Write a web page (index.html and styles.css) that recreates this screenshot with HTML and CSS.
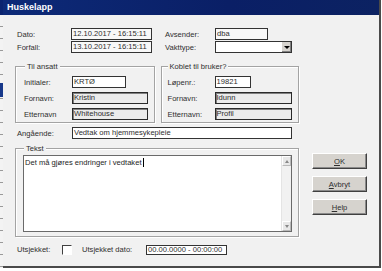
FILE: index.html
```html
<!DOCTYPE html>
<html lang="no">
  <head>
    <meta charset="UTF-8" />
    <title>Huskelapp</title>
    <link rel="stylesheet" href="styles.css">
  </head>
  <body>
    <div class="desk">
      <div class="edge"><span class="edge-mark"></span></div>

      <div class="dialog">
        <div class="titlebar">Huskelapp</div>

        <div class="body">
          <div class="main">
            <div class="head">
              <span>Dato:</span>
              <span class="field">12.10.2017 - 16:15:11</span>
              <span></span>
              <span>Avsender:</span>
              <span class="field sender">dba</span>

              <span>Forfall:</span>
              <span class="field">13.10.2017 - 16:15:11</span>
              <span></span>
              <span>Vakttype:</span>
              <span class="select">
                <span class="select-btn"><span class="tri-down"></span></span>
              </span>
            </div>

            <div class="groups">
              <div class="group g-ansatt">
                <span class="legend">Til ansatt</span>
                <div class="row">
                  <span class="lbl">Initialer:</span>
                  <span class="field white w-init">KRTØ</span>
                </div>
                <div class="row">
                  <span class="lbl">Fornavn:</span>
                  <span class="field ro w-name">Kristin</span>
                </div>
                <div class="row">
                  <span class="lbl">Etternavn</span>
                  <span class="field ro w-name">Whitehouse</span>
                </div>
              </div>

              <div class="group g-bruker">
                <span class="legend">Koblet til bruker?</span>
                <div class="row">
                  <span class="lbl">Løpenr.:</span>
                  <span class="field white w-nr">19821</span>
                </div>
                <div class="row">
                  <span class="lbl">Fornavn:</span>
                  <span class="field ro w-name2">Idunn</span>
                </div>
                <div class="row">
                  <span class="lbl">Etternavn:</span>
                  <span class="field ro w-name2">Profil</span>
                </div>
              </div>
            </div>

            <div class="subject">
              <span class="subject-lbl">Angående:</span>
              <span class="field white subject-field">Vedtak om hjemmesykepleie</span>
            </div>

            <div class="group g-tekst">
              <span class="legend">Tekst</span>
              <div class="memo">
                <div class="memo-text">Det må gjøres endringer i vedtaket<span class="caret"></span></div>
                <div class="scroll">
                  <span class="arrow"><span class="tri-up"></span></span>
                  <span class="arrow"><span class="tri-down small"></span></span>
                </div>
              </div>
            </div>

            <div class="checkout">
              <span class="co-lbl">Utsjekket:</span>
              <span class="checkbox"></span>
              <span class="co-date-lbl">Utsjekket dato:</span>
              <span class="field white co-date">00.00.0000 - 00:00:00</span>
            </div>
          </div>

          <div class="buttons">
            <button type="button" class="btn"><u>O</u>K</button>
            <button type="button" class="btn"><u>A</u>vbryt</button>
            <button type="button" class="btn"><u>H</u>elp</button>
          </div>
        </div>
      </div>
    </div>
  </body>
</html>
```

FILE: styles.css
```css
* {
  box-sizing: border-box;
}

body {
  margin: 0;
  background: #fff;
  font-family: "Liberation Sans", Arial, sans-serif;
  font-size: 7.6px;
  color: #2e2e2e;
}

.desk {
  display: flex;
  width: 382px;
  height: 271px;
  background: #fff;
}

.edge {
  width: 3px;
  height: 268px;
  display: flex;
  flex-direction: column;
  background:
    repeating-linear-gradient(#f3f3f3 0 11px, #9a9a9a 11px 12px),
    #f3f3f3;
  border-top: 15px solid #0b2470;
}

.edge-mark {
  margin-top: 68px;
  height: 14px;
  background: #17388a;
}

.dialog {
  width: 378px;
  height: 268px;
  display: flex;
  flex-direction: column;
  background: #f1f1f1;
  border-right: 2px solid #4a4a4a;
  border-bottom: 2px solid #4a4a4a;
}

.titlebar {
  height: 15px;
  padding-left: 4px;
  line-height: 15px;
  font-size: 9px;
  font-weight: bold;
  color: #fff;
  background: linear-gradient(90deg, #0d2a78, #0a1f66 60%, #0c2262);
}

.body {
  display: flex;
}

.main {
  margin-left: 12px;
  width: 284px;
}

/* top rows */
.head {
  display: grid;
  grid-template-columns: 54px 81px 13px 50px 1fr;
  grid-auto-rows: 12px;
  row-gap: 1px;
  align-items: center;
  padding: 13px 0 0 2px;
}

.field {
  display: block;
  height: 12px;
  padding-left: 1px;
  line-height: 10px;
  white-space: nowrap;
  overflow: hidden;
  border: 1px solid #333;
  background: #f8f8f8;
}

.field.white {
  background: #fff;
}

.field.ro {
  border-color: #2a2a2a;
  box-shadow: inset 1px 1px 0 #808080;
  background: #ebebeb;
}

.sender {
  width: 53px;
}

.select {
  display: flex;
  width: 77px;
  height: 12px;
  border: 1px solid #333;
  background: #fff;
}

.select-btn {
  margin-left: auto;
  width: 10px;
  display: flex;
  align-items: center;
  justify-content: center;
  background: #d6d3ce;
  border-left: 1px solid #fff;
  box-shadow: inset -1px -1px 0 #808080;
}

.tri-down {
  width: 0;
  height: 0;
  border-left: 3px solid transparent;
  border-right: 3px solid transparent;
  border-top: 3px solid #000;
}

.tri-down.small,
.tri-up {
  border-left-width: 2px;
  border-right-width: 2px;
  border-top-color: #888;
}

.tri-up {
  width: 0;
  height: 0;
  border-left: 2px solid transparent;
  border-right: 2px solid transparent;
  border-bottom: 3px solid #888;
}

/* group boxes */
.groups {
  display: flex;
  gap: 6px;
  margin-top: 13px;
}

.group {
  border: 1px solid #a3a3a3;
  box-shadow: inset 1px 1px 0 #fff, 1px 1px 0 #fff;
}

.legend {
  display: table;
  margin: -5px 0 0 7px;
  padding: 0 2px;
  line-height: 9px;
  background: #f1f1f1;
}

.g-ansatt {
  width: 140px;
  height: 57px;
  padding-left: 8px;
}

.g-bruker {
  width: 139px;
  height: 57px;
  padding-left: 6px;
}

.g-ansatt .legend {
  margin-left: 1px;
}

.g-bruker .legend {
  margin-left: 0;
}

.row {
  display: flex;
  align-items: center;
  height: 12px;
  margin-top: 4px;
}

.legend + .row {
  margin-top: 5px;
}

.g-ansatt .lbl {
  width: 48px;
}

.g-bruker .lbl {
  width: 47px;
}

.w-init {
  width: 54px;
}

.w-name {
  width: 76px;
}

.w-nr {
  width: 36px;
}

.w-name2 {
  width: 77px;
}

/* Angående */
.subject {
  display: flex;
  align-items: center;
  height: 12px;
  margin-top: 4px;
  padding-left: 2px;
}

.subject-lbl {
  width: 55px;
}

.subject-field {
  width: 220px;
}

/* Tekst */
.g-tekst {
  margin-top: 9px;
  height: 89px;
  padding-left: 7px;
}

.g-tekst .legend {
  margin-left: 1px;
}

.memo {
  display: flex;
  width: 269px;
  height: 77px;
  margin-top: 2px;
  border: 1px solid #6a6a6a;
  background: #fff;
}

.memo-text {
  flex: 1;
  padding: 2px 0 0 1px;
  line-height: 9px;
  color: #1e1e1e;
}

.caret {
  display: inline-block;
  width: 1px;
  height: 9px;
  margin-left: 1px;
  vertical-align: -2px;
  background: #000;
}

.scroll {
  width: 10px;
  display: flex;
  flex-direction: column;
  justify-content: space-between;
  background: #f1f1f1;
  border-left: 1px solid #e4e4e4;
}

.arrow {
  height: 10px;
  display: flex;
  align-items: center;
  justify-content: center;
  background: #e8e8e8;
  border: 1px solid #fff;
  border-right-color: #b8b8b8;
  border-bottom-color: #b8b8b8;
}

/* Utsjekket */
.checkout {
  display: flex;
  align-items: center;
  height: 11px;
  margin-top: 7px;
  padding-left: 2px;
}

.co-lbl {
  width: 45px;
}

.checkbox {
  width: 10px;
  height: 10px;
  margin-right: 10px;
  border: 1px solid;
  border-color: #404040 #fff #fff #404040;
  background: #fff;
}

.co-date-lbl {
  width: 64px;
}

.co-date {
  width: 81px;
  height: 10px;
  line-height: 8px;
}

/* buttons */
.buttons {
  display: flex;
  flex-direction: column;
  gap: 7px;
  margin-left: 13px;
  padding-top: 138px;
}

.btn {
  width: 55px;
  height: 16px;
  padding: 0;
  font: inherit;
  color: #2e2e2e;
  text-align: center;
  background: #d6d3ce;
  border: 1px solid;
  border-color: #fff #404040 #404040 #fff;
  box-shadow: inset -1px -1px 0 #8a8a8a;
}
```
